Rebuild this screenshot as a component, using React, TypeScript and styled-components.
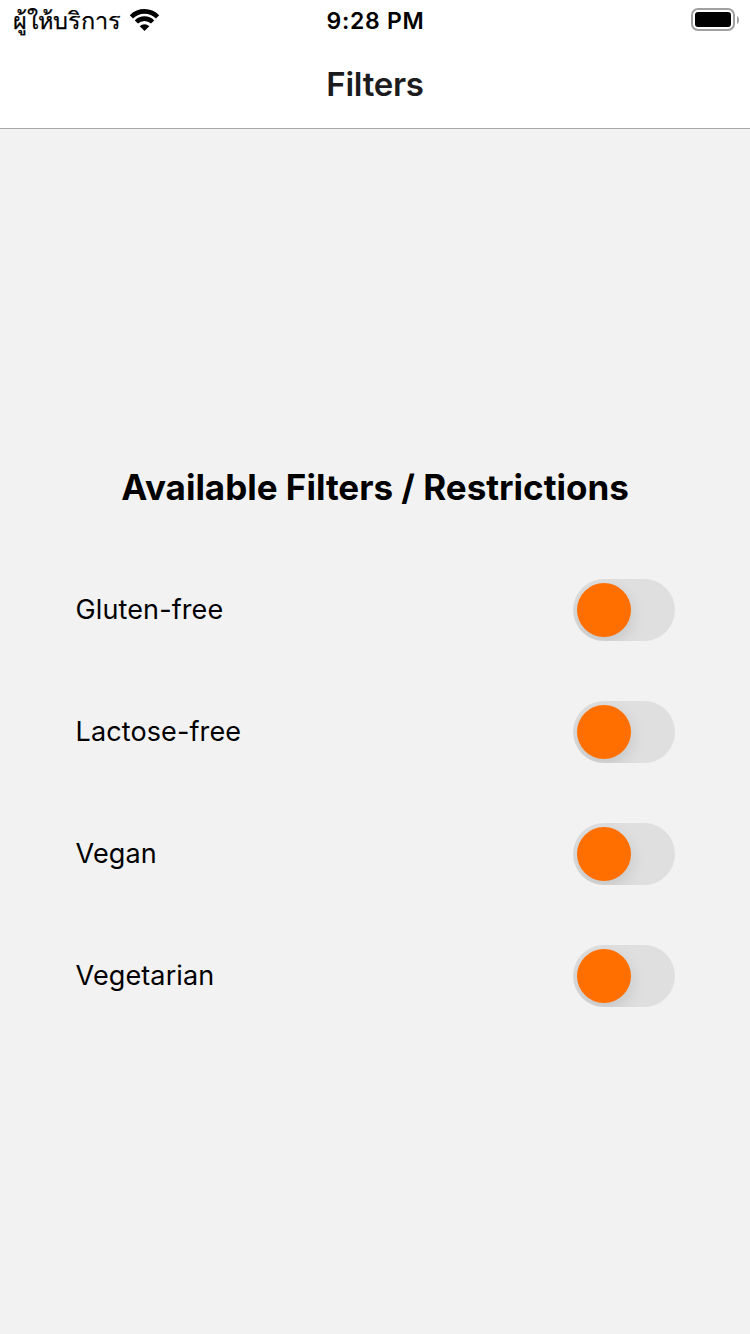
import React from "react";
import styled, { createGlobalStyle } from "styled-components";

const Global = createGlobalStyle`
  * { box-sizing: border-box; }
  body { margin: 0; background: #f2f2f2; font-family: Inter, "Noto Sans", sans-serif; color: #000; }
`;
const Screen = styled.div`
  width: 750px; height: 1334px; display: flex; flex-direction: column; background: #f2f2f2; overflow: hidden;
`;
const StatusBar = styled.div`
  height: 40px; display: grid; grid-template-columns: 1fr auto 1fr; align-items: center; padding: 0 10px 0 13px;
`;
const Header = styled.header`
  height: 129px; background: #fff; border-bottom: 1px solid #a7a7aa; flex: none;
`;
const Carrier = styled.div`
  display: flex; align-items: center; gap: 9px; font-size: 23.5px; white-space: nowrap;
`;
const CarrierName = styled.span`
  display: block; width: 108px; height: 40px; line-height: 42px; -webkit-text-stroke: 0.25px #000;
`;
const Clock = styled.div`
  height: 40px; font-size: 23px; font-weight: 600; letter-spacing: 0.7px; line-height: 42px; padding-right: 2px;
`;
const Battery = styled.div`
  display: flex; justify-content: flex-end;
`;
const Title = styled.h1`
  margin: 0; height: 88px; line-height: 88px; text-align: center; font-size: 33px; font-weight: 600; letter-spacing: -0.25px; color: #1c1c1e;
`;
const Content = styled.main`
  display: flex; flex-direction: column; padding: 336px 75px 0;
`;
const Heading = styled.h2`
  margin: 0; height: 44px; line-height: 44px; text-align: center; font-size: 35px; font-weight: 700; white-space: nowrap;
`;
const List = styled.div`
  display: flex; flex-direction: column; gap: 60px; padding-top: 70px;
`;
const Row = styled.label`
  display: flex; align-items: center; justify-content: space-between; height: 62px; font-size: 27px;
`;
const Label = styled.span`
  letter-spacing: 0.12px; padding-left: 0.5px; line-height: 34px; margin-top: -1px;
`;
const Track = styled.span`
  display: flex; width: 102px; height: 62px; padding: 4px; border-radius: 31px; background: #dfdfdf; overflow: hidden;
`;
const Thumb = styled.span`
  width: 54px; height: 54px; border-radius: 50%; background: #ff6f00; box-shadow: 0 6px 16px rgba(0,0,0,.12);
`;

const filters = ["Gluten-free", "Lactose-free", "Vegan", "Vegetarian"];

export default function App() {
  return (
    <Screen>
      <Global />
      <Header>
        <StatusBar>
          <Carrier>
            <CarrierName>ผู้ให้บริการ</CarrierName>
            <svg width="30" height="22" viewBox="0 0 30 22">
              <path d="M14.5 22l4.8-4.8a6.8 6.8 0 0 0-9.6 0z" />
              <path d="M6.4 14a11.4 11.4 0 0 1 16.2 0M1.4 8.8a18.6 18.6 0 0 1 26.2 0" transform="translate(0 -1)" fill="none" stroke="#000" strokeWidth="4.6" />
            </svg>
          </Carrier>
          <Clock>9:28 PM</Clock>
          <Battery>
            <svg width="49" height="24" viewBox="0 0 49 24">
              <rect x="1" y="1" width="42" height="21" rx="6" fill="none" stroke="#a0a0a0" strokeWidth="2" />
              <rect x="4" y="4" width="36" height="15" rx="3" />
              <path d="M46 8v8q2-1 2-4t-2-4z" fill="#a0a0a0" />
            </svg>
          </Battery>
        </StatusBar>
        <Title>Filters</Title>
      </Header>
      <Content>
        <Heading>Available Filters / Restrictions</Heading>
        <List>
          {filters.map((name) => (
            <Row key={name}>
              <Label>{name}</Label>
              <Track role="switch" aria-checked={false}><Thumb /></Track>
            </Row>
          ))}
        </List>
      </Content>
    </Screen>
  );
}
